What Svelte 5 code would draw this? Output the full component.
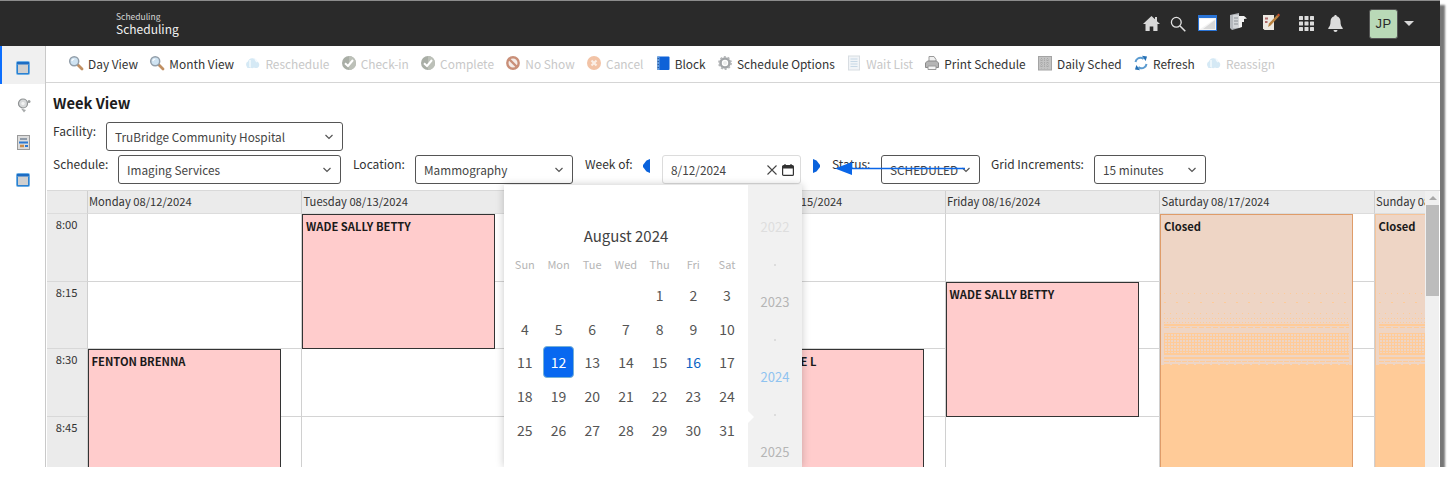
<script>
  const tools = [
    { label: 'Day View', icon: 'lens' },
    { label: 'Month View', icon: 'lens' },
    { label: 'Reschedule', icon: 'cloud', off: true },
    { label: 'Check-in', icon: 'check', off: true },
    { label: 'Complete', icon: 'check', off: true },
    { label: 'No Show', icon: 'noshow', off: true },
    { label: 'Cancel', icon: 'cancel', off: true },
    { label: 'Block', icon: 'block' },
    { label: 'Schedule Options', icon: 'gear' },
    { label: 'Wait List', icon: 'list', off: true },
    { label: 'Print Schedule', icon: 'print' },
    { label: 'Daily Sched', icon: 'daily' },
    { label: 'Refresh', icon: 'refresh' },
    { label: 'Reassign', icon: 'cloud', off: true }
  ];
  const days = ['Monday 08/12/2024', 'Tuesday 08/13/2024', 'Wednesday 08/14/2024', 'Thursday 08/15/2024', 'Friday 08/16/2024', 'Saturday 08/17/2024', 'Sunday 08/18/2024'];
  const times = ['8:00', '8:15', '8:30', '8:45'];
  const events = [
    { name: 'FENTON BRENNA', col: 2, row: 4, span: 2 },
    { name: 'WADE SALLY BETTY', col: 3, row: 2, span: 2 },
    { name: 'WADE SALLIE L', col: 5, row: 4, span: 2 },
    { name: 'WADE SALLY BETTY', col: 6, row: 3, span: 2 },
    { name: 'Closed', col: 7, row: 2, span: 4, closed: true },
    { name: 'Closed', col: 8, row: 2, span: 4, closed: true, last: true }
  ];
  const weekdays = ['Sun', 'Mon', 'Tue', 'Wed', 'Thu', 'Fri', 'Sat'];
  const cal = [null, null, null, null];
  for (let d = 1; d <= 31; d++) cal.push(d);
</script>

{#snippet icon(name)}
  <svg class="ti" viewBox="0 0 16 16" width="16" height="16" aria-hidden="true">
    {#if name === 'lens'}
      <path d="M9.500 9.500 14 14" stroke="#c08f62" stroke-width="2.800" stroke-linecap="round"/>
      <circle cx="6.200" cy="6.200" r="4.500" fill="#cfe3f2" stroke="#929ea9" stroke-width="1.500"/>
      <path d="M3.800 6a3 3 0 0 1 2.500-2" stroke="#fff" stroke-width="1.200" fill="none"/>
    {:else if name === 'cloud'}
      <path d="M2 12c-1.600-2-1-5 1-5.500C3.500 4 6 2.500 8.500 3.500c2 0 3.500 1.500 4 3.500 2 .5 2.500 4 .5 5.500-1.500 1-3 .5-4 0-1 .8-2.500 1-3.500 0-1 .8-2.600.8-3.500 0z" fill="#d5e9f5"/>
      <path d="M5 5v7M10 4l2 3" stroke="#f4fafd" stroke-width="1.500" fill="none"/>
    {:else if name === 'check'}
      <circle cx="8" cy="8" r="7" fill="#a9aea6"/>
      <path d="M8 1a7 7 0 0 1 0 14z" fill="#bcc0b8"/>
      <path d="M4 8.200 7 11l5-6" stroke="#fff" stroke-width="2" fill="none"/>
    {:else if name === 'noshow'}
      <circle cx="8" cy="8" r="5.700" fill="#f4ece8" stroke="#c98f78" stroke-width="2.400"/>
      <path d="M4.500 4.500l7 7" stroke="#c98f78" stroke-width="2.400"/>
    {:else if name === 'cancel'}
      <circle cx="8" cy="8" r="7" fill="#f2c3a6"/>
      <path d="M5.500 5.500l5 5M10.500 5.500l-5 5" stroke="#fbeee5" stroke-width="2.200"/>
    {:else if name === 'block'}
      <rect x="2" y="1.500" width="12.500" height="13.500" rx="1" fill="#0f62d8"/>
      <rect x="2" y="1.500" width="2.500" height="13.500" fill="#6b9fdc"/>
      <path d="M3.200 3v10" stroke="#133f80" stroke-dasharray="1 2"/>
    {:else if name === 'gear'}
      <circle cx="8" cy="8" r="4.500" fill="none" stroke="#a2a5a8" stroke-width="2.600"/>
      <circle cx="8" cy="8" r="6" fill="none" stroke="#b4b6b8" stroke-width="1.800" stroke-dasharray="2 1.770"/>
      <circle cx="8" cy="8" r="2" fill="#eceded"/>
    {:else if name === 'list'}
      <rect x="2.500" y="1" width="11" height="14" fill="#f1f4f7" stroke="#d8dde2"/>
      <path d="M4.500 4h7M4.500 6.500h7M4.500 9h7M4.500 11.500h7" stroke="#c7d8e6"/>
    {:else if name === 'print'}
      <path d="M5 1.500h5l2 3v3H5z" fill="#f0f0f0" stroke="#9a9a9a"/>
      <path d="M1.500 8l2-2h9l2 2v4.500h-13z" fill="#b5b5b5" stroke="#8a8a8a"/>
      <path d="M4 11h8v3.500H4z" fill="#f5f5f5" stroke="#9a9a9a"/>
    {:else if name === 'daily'}
      <rect x="1.500" y="1.500" width="13" height="13.500" fill="#c3c3c3" stroke="#a4a4a4"/>
      <path d="M4.500 3v10.500M7.500 3v10.500M10.500 3v10.500M3 5h10M3 8h10M3 11h10" stroke="#a8a8a8" stroke-dasharray="1 1"/>
    {:else if name === 'refresh'}
      <path d="M2.500 7C3 4 6 2 9 3l1.500 1" stroke="#5b9bd0" stroke-width="2" fill="none"/>
      <path d="M9 .8l5 .7-1.400 4.500z" fill="#2470b5"/>
      <path d="M13.500 9c-.5 3-3.500 5-6.500 4l-1.500-1" stroke="#5b9bd0" stroke-width="2" fill="none"/>
      <path d="M7 15.200l-5-.7 1.400-4.500z" fill="#2470b5"/>
    {/if}
  </svg>
{/snippet}

{#snippet win()}
  <svg viewBox="0 0 14 14" width="14" height="14" aria-hidden="true">
    <rect x=".5" y=".5" width="13" height="13" rx="1" fill="#d0d0d0" stroke="#6aaee6"/>
    <rect x="1" y="1" width="12" height="2.500" fill="#1b6cc4"/>
    <rect x="1" y="3.500" width="1" height="9.500" fill="#2c80d0"/>
    <rect x="12" y="3.500" width="1" height="9.500" fill="#2c80d0"/>
    <rect x="1" y="12" width="12" height="1" fill="#2c80d0"/>
  </svg>
{/snippet}

{#snippet chevron()}
  <svg class="chev" viewBox="0 0 10 6" width="10" height="6" aria-hidden="true"><path d="M1.500 1 5 4.500 8.500 1" fill="none" stroke="#555" stroke-width="1.200"/></svg>
{/snippet}

<div class="window">
  <header class="top">
    <div class="brand">
      <span class="brand-sub">Scheduling</span>
      <span class="brand-main">Scheduling</span>
    </div>
    <nav class="top-icons">
      <svg class="h-home" viewBox="0 0 17 15" width="17" height="15" aria-hidden="true"><path d="M8.500 0 0 8h2.500v7h4.200v-4.500h3.600V15h4.200V8H17l-3-2.800V1h-2v2.300z" fill="#d8d8d8"/></svg>
      <svg class="h-search" viewBox="0 0 16 16" width="16" height="16" aria-hidden="true"><circle cx="6.300" cy="6.300" r="4.900" fill="none" stroke="#e2e2e2" stroke-width="1.300"/><path d="M10 10l5.300 5.300" stroke="#e2e2e2" stroke-width="1.500"/></svg>
      <svg class="h-win" viewBox="0 0 19 16" width="19" height="16" aria-hidden="true"><rect x=".5" y=".5" width="18" height="15" fill="#f3f3f3" stroke="#2a74d6"/><rect x="1" y="1" width="17" height="2" fill="#2a74d6"/><path d="M2 14V4h15z" fill="#fff"/><path d="M17 5v9H5z" fill="#d8d8d8"/></svg>
      <svg class="h-doc" viewBox="0 0 19 18" width="19" height="18" aria-hidden="true"><path d="M1 2l9-2v15l-7 2-2-2z" fill="#b4b8bd"/><path d="M4 2h6v13H4z" fill="#d2d5d8"/><path d="M10 3h5l3 2.500-3 .5v3h-2v5l-3 1z" fill="#f2f2f2"/><path d="M5 5h4M5 8h4M5 11h4" stroke="#8d9297"/></svg>
      <svg class="h-note" viewBox="0 0 18 18" width="18" height="18" aria-hidden="true"><path d="M1 2h11v15H2.500L1 15.500z" fill="#ece8e1"/><path d="M3 4.500h3v2H3zM3 8h2.500v2H3z" fill="#b06b6b"/><path d="M6 14l1-3.500L15 2l2 1.500-8.500 9z" fill="#b8813f"/><path d="M15 2l1.500-1.500 1.500 1.500-1 1.500z" fill="#c9502a"/></svg>
      <svg class="h-grid" viewBox="0 0 15 15" width="15" height="15" aria-hidden="true"><g fill="#dcdcdc"><rect width="4" height="4" rx=".5"/><rect x="5.500" width="4" height="4" rx=".5"/><rect x="11" width="4" height="4" rx=".5"/><rect y="5.500" width="4" height="4" rx=".5"/><rect x="5.500" y="5.500" width="4" height="4" rx=".5"/><rect x="11" y="5.500" width="4" height="4" rx=".5"/><rect y="11" width="4" height="4" rx=".5"/><rect x="5.500" y="11" width="4" height="4" rx=".5"/><rect x="11" y="11" width="4" height="4" rx=".5"/></g></svg>
      <svg class="h-bell" viewBox="0 0 15 17" width="15" height="17" aria-hidden="true"><path d="M7.500 0C8.300 0 8.800.6 8.800 1.300 11.300 2 12.500 4 12.500 6.500c0 3.500.8 5 2.200 6.500v1H.3v-1C1.700 11.500 2.500 10 2.500 6.500 2.500 4 3.700 2 6.200 1.300 6.200.6 6.700 0 7.500 0zM5.500 15h4a2 2 0 0 1-4 0z" fill="#dcdcdc"/></svg>
      <span class="avatar">JP</span>
      <span class="caret"></span>
    </nav>
  </header>
  <div class="body">
    <aside class="side">
      <div class="side-item active">{@render win()}</div>
      <div class="side-item nudge">
        <svg viewBox="0 0 14 15" width="14" height="15" aria-hidden="true"><circle cx="6" cy="5.500" r="4.500" fill="#d7d9da" stroke="#8e9192" stroke-width="1.200"/><circle cx="6" cy="5.500" r="1.700" fill="#f2f2f2"/><path d="M4 10.500l5 1.500-2 2.500z" fill="#a6a9aa"/><circle cx="12" cy="3.500" r="1.500" fill="#9a9d9e"/></svg>
      </div>
      <div class="side-item nudge">
        <svg viewBox="0 0 13 15" width="13" height="15" aria-hidden="true"><rect x=".5" y=".5" width="12" height="14" fill="#dcdcdc" stroke="#9a9a9a"/><path d="M3 3h7v2H3z" fill="#8e9aa8"/><path d="M2 7.500h9" stroke="#2c78d0" stroke-width="2"/><path d="M3 11h4" stroke="#c98d4d" stroke-width="2.500"/><path d="M8 11h3" stroke="#2c78d0" stroke-width="2"/></svg>
      </div>
      <div class="side-item">{@render win()}</div>
    </aside>
    <main class="content">
      <div class="toolbar">
        {#each tools as t}
          <span class="tool" class:off={t.off}>{@render icon(t.icon)}<span>{t.label}</span></span>
        {/each}
      </div>
      <h1>Week View</h1>
      <div class="row row-one">
        <span class="lbl">Facility:</span>
        <div class="sel s-fac"><span>TruBridge Community Hospital</span>{@render chevron()}</div>
      </div>
      <div class="row row-two">
        <span class="lbl l-sched">Schedule:</span>
        <div class="sel s-sched"><span>Imaging Services</span>{@render chevron()}</div>
        <span class="lbl l-loc">Location:</span>
        <div class="sel s-loc"><span>Mammography</span>{@render chevron()}</div>
        <span class="lbl l-week">Week of:</span>
        <span class="nav nav-l"></span>
        <div class="date">
          <span>8/12/2024</span>
          <span class="date-icons">
            <svg viewBox="0 0 10 10" width="10" height="10" aria-hidden="true"><path d="M.5.500l9 9M9.500.500l-9 9" stroke="#444" stroke-width="1.100"/></svg>
            <svg viewBox="0 0 12 12" width="12" height="12" aria-hidden="true"><rect x=".6" y="1.600" width="10.800" height="9.800" rx="1" fill="none" stroke="#333" stroke-width="1.200"/><rect x="1" y="2" width="10" height="2.500" fill="#333"/><path d="M3 0v2M9 0v2" stroke="#333" stroke-width="1.200"/></svg>
          </span>
        </div>
        <span class="nav nav-r"></span>
        <span class="lbl l-status">Status:</span>
        <div class="sel s-status"><span>SCHEDULED</span>{@render chevron()}</div>
        <span class="lbl l-grid">Grid Increments:</span>
        <div class="sel s-grid"><span>15 minutes</span>{@render chevron()}</div>
      </div>

      <div class="sched">
        <div class="grid">
          <div class="hd corner"></div>
          {#each days as d, i}
            <div class="hd" style:grid-column={i + 2}>{d}</div>
          {/each}
          {#each times as t, r}
            <div class="time" style:grid-row={r + 2}>{t}</div>
            {#each days as _, c}
              <div class="cell" style:grid-row={r + 2} style:grid-column={c + 2}></div>
            {/each}
          {/each}
          {#each events as e}
            <div class="ev" class:closed={e.closed} class:last={e.last} style:grid-column={e.col} style:grid-row="{e.row} / span {e.span}">{e.name}</div>
          {/each}
        </div>
        <div class="scrollbar">
          <span class="sb-up"></span>
          <span class="sb-thumb"></span>
        </div>
      </div>

      <div class="picker">
        <div class="cal">
          <div class="cal-title">August 2024</div>
          <div class="cal-grid">
            {#each weekdays as w}<span class="wd">{w}</span>{/each}
            {#each cal as d}
              <span class="day" class:sel-day={d === 12} class:today={d === 16}>{d ?? ''}</span>
            {/each}
          </div>
        </div>
        <div class="years">
          <span class="y y1">2022</span><span class="dot"></span>
          <span class="y">2023</span><span class="dot"></span>
          <span class="y cur">2024</span><span class="dot"></span>
          <span class="y">2025</span>
          <span class="notch"></span>
        </div>
      </div>

      <svg class="arrow" viewBox="0 0 130 14" width="130" height="14" aria-hidden="true">
        <path d="M0 7.500 17 1v13z" fill="#0a66e8"/><path d="M10 7.500h120" stroke="#0a66e8" stroke-width="1.500"/>
      </svg>
    </main>
  </div>
</div>

<style>
  :global(body) { margin: 0; background: #fff; }
  .window {
    width: 1440px; height: 466px; margin-top: 1px;
    box-shadow: 0 -1px 0 #8c8c8c, 5px 4px 2px #777;
    overflow: hidden; display: flex; flex-direction: column;
    font-family: "Noto Sans CJK JP", "Noto Sans", sans-serif; color: #333; background: #fff;
  }
  .top { height: 45px; flex: none; background: #2a2a2a; display: flex; align-items: center; justify-content: space-between; }
  .brand { margin-left: 116px; display: flex; flex-direction: column; margin-top: -2px; }
  .brand-sub { font-size: 8.500px; line-height: 11px; color: #d5d5d5; }
  .brand-main { font-size: 12px; line-height: 13px; color: #f2f2f2; }
  .top-icons { display: flex; align-items: center; margin-right: 26px; }
  .top-icons svg { flex: none; }
  .h-home { margin-right: 10px; }
  .h-search { margin-right: 12px; }
  .h-win { margin-right: 12px; margin-top: -2px; }
  .h-doc { margin-right: 14px; margin-top: -3px; }
  .h-note { margin-right: 19px; margin-top: -3px; }
  .h-grid { margin-right: 14px; }
  .h-bell { margin-right: 26px; }
  .avatar {
    width: 29px; height: 30px; box-sizing: border-box; border: 1px solid #555; border-radius: 3px;
    background: #b9d9b7; color: #2a2a2a; font: 400 13px/28px "Liberation Sans", sans-serif; text-align: center; letter-spacing: .5px; margin-right: 6px;
  }
  .caret { width: 0; height: 0; border: 5px solid transparent; border-top: 5px solid #d8d8d8; border-bottom: 0; }

  .body { flex: 1; min-height: 0; display: flex; }
  .side { width: 45px; flex: none; border-right: 1px solid #c9c9c9; display: flex; flex-direction: column; }
  .side-item { height: 37.500px; box-sizing: border-box; padding-top: 6px; display: flex; align-items: center; justify-content: center; flex: none; }
  .side-item.active { background: #f0f0f0; box-shadow: inset 2px 0 0 #0d6efd; }
  .side-item svg { display: block; }
  .nudge svg { margin-left: 2px; }

  .content { flex: 1; min-width: 0; position: relative; }
  .toolbar {
    height: 37px; box-sizing: border-box; border-bottom: 1px solid #d5d5d5;
    display: flex; align-items: center; gap: 11.300px; padding: 0 0 2px 22px; font-size: 11.900px; color: #333;
  }
  .tool { display: inline-flex; align-items: center; gap: 4px; white-space: nowrap; }
  .tool.off { color: #c8c8c8; }
  .ti { flex: none; }

  h1 { margin: 0; padding: 10px 0 0 7px; font-size: 14.700px; line-height: 19px; font-weight: 700; color: #1c1c1c; }
  .row { display: flex; align-items: flex-start; padding-left: 7px; font-size: 12px; }
  .row-one { margin-top: 10px; height: 29px; }
  .row-two { margin-top: 4px; height: 29px; }
  .lbl { line-height: 18px; white-space: nowrap; }
  .sel {
    height: 29px; box-sizing: border-box; border: 1px solid #555; border-radius: 3px; background: #fff;
    display: flex; align-items: center; justify-content: space-between; padding: 0 8px; color: #444; white-space: nowrap; font-size: 11.800px;
  }
  .chev { flex: none; }
  .s-fac { width: 237px; margin-left: 7px; }
  .row-one .lbl { width: 46px; }
  .row-two .l-sched { width: 58px; }
  .s-sched { width: 223px; margin-left: 7px; }
  .l-loc { margin-left: 12px; width: 62px; }
  .s-loc { width: 158px; }
  .l-week { margin-left: 12px; width: 58px; }
  .nav { width: 7px; height: 14px; margin-top: 4px; background: #0a62dc; flex: none; }
  .nav-l { clip-path: polygon(100% 0, 100% 100%, 50% 90%, 0 58%, 0 42%, 50% 10%); }
  .nav-r { clip-path: polygon(0 0, 50% 10%, 100% 42%, 100% 58%, 50% 90%, 0 100%); margin-left: 12px; }
  .date {
    width: 139px; height: 29px; box-sizing: border-box; border: 1px solid #dcdcdc; border-radius: 3px; margin-left: 12px;
    display: flex; align-items: center; justify-content: space-between; padding: 0 6px 0 8px; color: #444; font-size: 11.800px;
  }
  .date-icons { display: flex; align-items: center; gap: 5px; }
  .date-icons svg { display: block; }
  .l-status { margin-left: 12px; width: 49px; }
  .s-status { width: 99px; }
  .l-grid { margin-left: 11px; width: 103px; }
  .s-grid { width: 112px; }

  .sched { display: flex; margin: 6px 0 0 1px; height: 277px; overflow: hidden; border-top: 1px solid #d9d9d9; box-sizing: border-box; }
  .grid {
    width: 1378px; flex: none; display: grid; overflow: hidden;
    grid-template-columns: 40.500px repeat(7, 214.500px); grid-template-rows: 23px repeat(4, 67.500px);
  }
  .hd { background: #ebebeb; border-right: 1px solid #cfcfcf; border-bottom: 1px solid #dcdcdc; font-size: 11.200px; line-height: 21px; padding-left: 1.500px; white-space: nowrap; overflow: hidden; grid-row: 1; }
  .corner { grid-column: 1; }
  .time { grid-column: 1; background: #ebebeb; border-right: 1px solid #cfcfcf; border-bottom: 1px solid #d8d8d8; font-size: 11.200px; text-align: right; padding: 2px 9px 0 0; }
  .cell { border-right: 1px solid #d0d0d0; border-bottom: 1px solid #d4d4d4; }
  .ev {
    width: 193px; box-sizing: border-box; background: #ffcccc; border: 1px solid #333; padding: 4px 0 0 3px;
    font-size: 11.200px; line-height: 14px; font-weight: 700; color: #1a1a1a; white-space: nowrap; overflow: hidden; z-index: 1; justify-self: start;
  }
  .ev.closed {
    border-color: #df9c69; border-bottom: 0;
    --d: #ffcb98;
    background-color: #eed5c5;
    background-repeat: no-repeat;
    background-image:
      repeating-linear-gradient(90deg, var(--d) 0 1px, transparent 1px 6px),
      repeating-linear-gradient(90deg, var(--d) 0 2px, transparent 2px 12px),
      repeating-linear-gradient(90deg, var(--d) 0 1px, transparent 1px 6px),
      repeating-linear-gradient(90deg, var(--d) 0 1px, transparent 1px 3px),
      repeating-linear-gradient(90deg, var(--d) 0 1px, transparent 1px 3px),
      linear-gradient(var(--d), var(--d)),
      repeating-linear-gradient(90deg, var(--d) 0 5px, transparent 5px 7px),
      repeating-linear-gradient(90deg, var(--d) 0 1px, transparent 1px 3px),
      repeating-linear-gradient(180deg, var(--d) 0 1px, transparent 1px 3px),
      linear-gradient(var(--d), var(--d)),
      linear-gradient(var(--d), var(--d)),
      repeating-linear-gradient(90deg, var(--d) 0 5px, transparent 5px 6px),
      repeating-linear-gradient(90deg, var(--d) 0 6px, transparent 6px 8px),
      linear-gradient(var(--d), var(--d));
    background-position:
      3px 78px, 3px 87px, 3px 98px, 3px 103px, 3px 107px, 3px 109px, 3px 112px,
      3px 118px, 3px 118px, 3px 138px, 3px 142px, 3px 146px, 3px 149px, 0 150px;
    background-size:
      calc(100% - 6px) 1px, calc(100% - 6px) 1px, calc(100% - 6px) 1px, calc(100% - 6px) 1px, calc(100% - 6px) 1px,
      calc(100% - 6px) 2px, calc(100% - 6px) 1px, calc(100% - 6px) 20px, calc(100% - 6px) 20px,
      calc(100% - 6px) 2px, calc(100% - 6px) 2px, calc(100% - 6px) 1px, calc(100% - 6px) 1px, 100% 200px;
  }
  .ev.last { border-color: #f5c59b; }

  .scrollbar { width: 14px; flex: none; background: #f0f0f0; display: flex; flex-direction: column; align-items: flex-start; padding-left: 1px; box-sizing: border-box; }
  .sb-up { width: 0; height: 0; border: 4px solid transparent; border-bottom: 4px solid #a8a8a8; border-top: 0; margin: 5px 0 5px 3px; }
  .sb-thumb { width: 13px; height: 91px; background: #bcbcbc; }

  .picker {
    position: absolute; left: 458px; top: 139px; width: 298px; height: 282px; z-index: 3;
    background: #fff; box-shadow: 0 0 8px rgba(0,0,0,.22); display: flex;
  }
  .cal { width: 244px; flex: none; }
  .cal-title { margin-top: 41px; text-align: center; font-size: 15px; line-height: 20px; color: #424242; }
  .cal-grid { display: grid; grid-template-columns: repeat(7, 33.700px); grid-template-rows: 23px; grid-auto-rows: 33.700px; padding: 0 4px; margin-top: 9px; }
  .wd { font-size: 11px; color: #b5b5b5; text-align: center; line-height: 19px; height: 19px; align-self: start; }
  .day { display: flex; align-items: center; justify-content: center; font-size: 14px; color: #555; margin: 1px; border-radius: 4px; box-sizing: border-box; }
  .sel-day { background: #0868f0; color: #fff; border: 1px solid #76b1d6; }
  .today { color: #0b62c4; }
  .years { flex: 1; background: #f1f1f1; position: relative; display: flex; flex-direction: column; align-items: center; padding-top: 33px; font-size: 13px; color: #b5b5b5; }
  .y { line-height: 18px; height: 18px; }
  .y1 { color: #dedede; }
  .cur { color: #8fc3f0; }
  .dot { width: 2px; height: 2px; margin: 27.500px 0; background: #d4d4d4; border-radius: 50%; flex: none; }
  .notch { position: absolute; left: 0; top: 226px; width: 0; height: 0; border: 6px solid transparent; border-left: 6px solid #fff; border-right: 0; }

  .arrow { position: absolute; left: 789px; top: 115px; z-index: 2; }
</style>
